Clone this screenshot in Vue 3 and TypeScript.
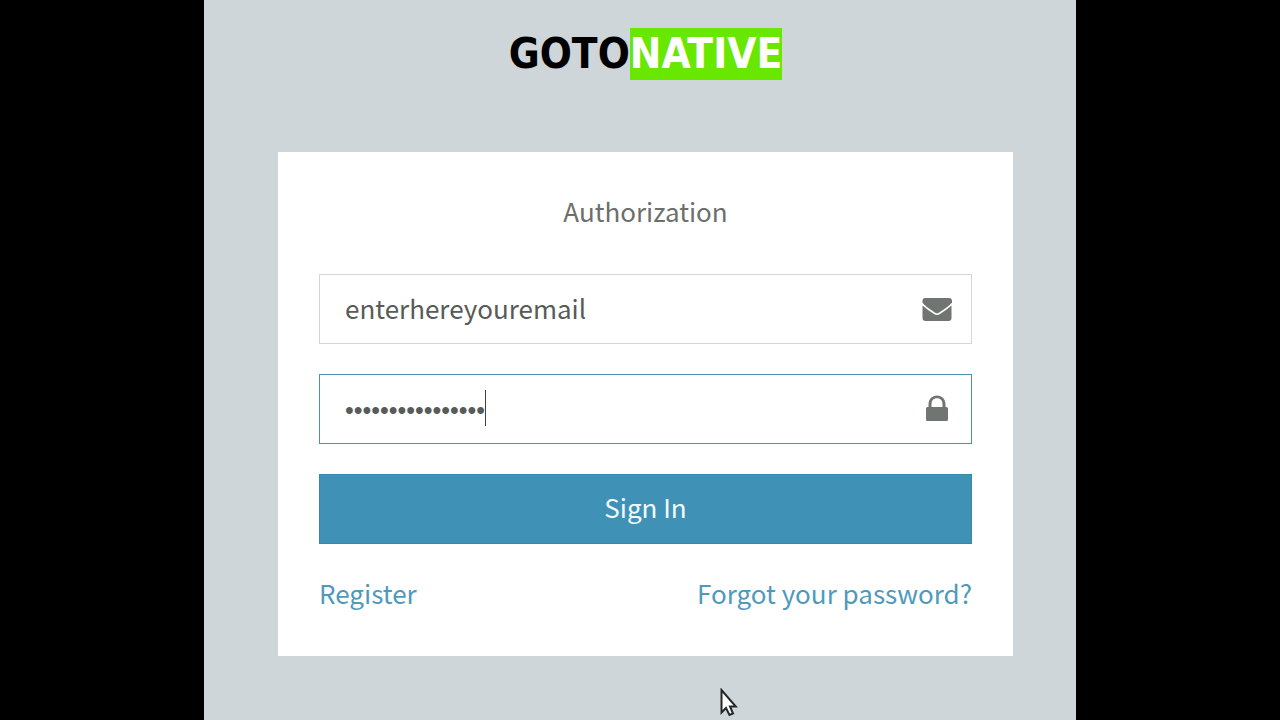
<script setup lang="ts">
import { ref } from 'vue'

const email = ref<string>('enterhereyouremail')
const password = ref<string>('enterherepasswrd')
</script>

<template>
  <div class="screen">
    <main class="stage">
      <h1 class="logo"><span class="goto">GOTO</span><span class="native">NATIVE</span></h1>

      <form class="card" @submit.prevent>
        <h2 class="title">Authorization</h2>

        <div class="field">
          <input v-model="email" type="text" name="email" aria-label="Email" autocomplete="off" />
          <svg class="icon" viewBox="0 0 30 30" aria-hidden="true">
            <path d="M3 4H27Q30 4 30 7V8.5Q28 11.500 16.800 18.800Q15 19.800 13.200 18.800Q2 11.500 0.500 8.500V7Q0.500 4 3 4Z" />
            <path d="M0.500 11.500Q5 15.500 12 20Q15 21.800 18 20Q25 15.500 29.500 11.500V24Q29.500 27 26.500 27H3.500Q0.500 27 0.500 24Z" />
          </svg>
        </div>

        <div class="field focused">
          <input v-model="password" class="secret" type="password" name="password" aria-label="Password" autocomplete="off" />
          <span class="caret"></span>
          <svg class="icon" viewBox="0 0 30 30" aria-hidden="true">
            <path fill-rule="evenodd" d="M6.500 13V10.500C6.500 5 10 1.500 15 1.500S23.500 5 23.500 10.500V13H24.500Q26 13 26 14.500V25.500Q26 27 24.500 27H5.500Q4 27 4 25.500V14.500Q4 13 5.500 13ZM9.500 13H20.500V10.500C20.500 6.500 18.500 4.300 15 4.300S9.500 6.500 9.500 10.500Z" />
          </svg>
        </div>

        <button class="submit" type="submit">Sign In</button>

        <nav class="links">
          <a href="#register">Register</a>
          <a href="#forgot">Forgot your password?</a>
        </nav>
      </form>

      <svg class="pointer" viewBox="0 0 18 30" aria-hidden="true">
        <path d="M1.500 2V24.500L6 20L9.500 27L13 25.500L10 18.500H15.800Z" />
      </svg>
    </main>
  </div>
</template>

<style>
body {
  background: #000;
}
</style>

<style scoped>
.screen {
  min-height: 100vh;
  display: flex;
  justify-content: center;
  background: #000;
  font-family: "Noto Sans CJK SC", "Noto Sans", sans-serif;
  font-size: 26px;
  line-height: 38px;
}

.stage {
  position: relative;
  box-sizing: border-box;
  width: 100%;
  max-width: 872px;
  padding: 28px 63px 64px 74px;
  background: #ced6da;
}

.logo {
  display: flex;
  justify-content: center;
  margin: 0 0 72px;
  font-family: "DejaVu Sans Condensed", "DejaVu Sans", sans-serif;
  font-size: 42px;
  font-weight: 700;
  line-height: 52px;
  color: #000;
}

.native {
  background: #68e800;
  color: #fff;
}

.card {
  display: flex;
  flex-direction: column;
  box-sizing: border-box;
  padding: 40px 41px 44px;
  background: #fff;
}

.title {
  margin: 0 0 44px;
  font-size: 26px;
  font-weight: 400;
  text-align: center;
  color: #6c6f6c;
}

.field {
  position: relative;
  display: flex;
  align-items: center;
  box-sizing: border-box;
  height: 70px;
  margin-bottom: 30px;
  padding: 0 19px 0 25px;
  border: 1px solid #d2d6d8;
}

.focused {
  border-color: #4a92b0;
}

.field input {
  flex: 1;
  min-width: 0;
  padding: 0 0 2px;
  border: 0;
  outline: 0;
  background: transparent;
  font: inherit;
  color: #585b58;
}

.field .secret {
  padding: 2px 0 0;
  font-family: "Liberation Sans", Arial, sans-serif;
  font-size: 25px;
}

.caret {
  position: absolute;
  left: 165px;
  top: 15px;
  width: 1px;
  height: 36px;
  background: #404340;
}

.icon {
  width: 30px;
  height: 30px;
  fill: #717571;
}

.submit {
  height: 70px;
  padding: 0 0 4px;
  border: 1px solid #3b87ab;
  background: #4091b6;
  font: inherit;
  color: #f2fbff;
  cursor: pointer;
}

.links {
  display: flex;
  justify-content: space-between;
  margin-top: 30px;
}

.links a {
  color: #4f9abb;
  text-decoration: none;
}

.pointer {
  position: absolute;
  left: 516px;
  top: 688px;
  width: 18px;
  height: 30px;
  fill: #fff;
  stroke: #25282a;
  stroke-width: 2;
}
</style>
